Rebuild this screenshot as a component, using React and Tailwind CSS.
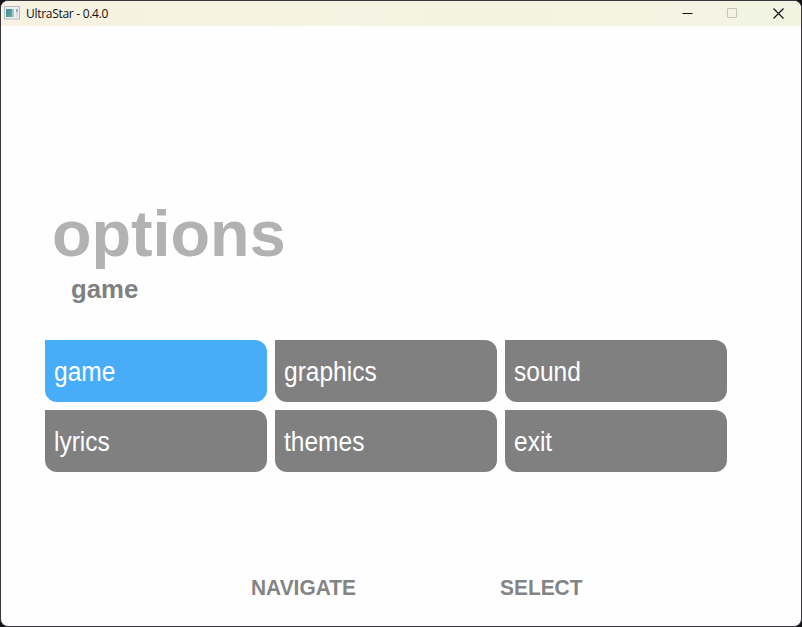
const MENU = [
  { label: "game", active: true },
  { label: "graphics" },
  { label: "sound" },
  { label: "lyrics" },
  { label: "themes" },
  { label: "exit" },
];

function AppIcon() {
  return (
    <svg className="mb-[1px] ml-[3px] h-[14px] w-4 shrink-0" viewBox="0 0 16 14">
      <rect x="0.5" y="0.5" width="15" height="12.5" fill="#eef1f2" stroke="#b4babd" />
      <defs>
        <linearGradient id="pane" x1="0" y1="0" x2="1" y2="1">
          <stop offset="0" stopColor="#4389a5" />
          <stop offset="1" stopColor="#5fae8b" />
        </linearGradient>
      </defs>
      <rect x="2" y="3" width="6" height="8" fill="url(#pane)" />
      <rect x="8" y="3" width="2" height="8" fill="#a9c3ca" />
      <rect x="12" y="3" width="2" height="3" fill="#93aeb6" />
      <rect x="12" y="6" width="2" height="5" fill="#d5dcdf" />
    </svg>
  );
}

function TitleBar() {
  return (
    <header className="flex h-[25px] items-center bg-linear-to-r from-[#f7f2e2] to-[#f2f4e2]">
      <AppIcon />
      <span className="ml-[6px] mt-[1px] whitespace-nowrap font-['Open_Sans',sans-serif] text-[12px] leading-none tracking-[-0.29px] text-[#111]">
        UltraStar - 0.4.0
      </span>
      <div className="ml-auto mr-[17.5px] flex items-center gap-[34.5px]">
        <svg className="h-[11px] w-[11px]" viewBox="0 0 11 11">
          <path d="M0.5 5.5H10.5" stroke="#111" />
        </svg>
        <svg className="h-[11px] w-[11px]" viewBox="0 0 11 11">
          <rect x="0.5" y="0.5" width="9" height="9" rx="0.5" fill="none" stroke="#c3c4b4" />
        </svg>
        <svg className="h-[11px] w-[11px]" viewBox="0 0 11 11">
          <path d="M0.5 0.5L10.5 10.5M10.5 0.5L0.5 10.5" stroke="#111" strokeWidth="1.15" />
        </svg>
      </div>
    </header>
  );
}

export default function App() {
  return (
    <div className="h-[627px] w-[802px] overflow-hidden bg-[#141316] font-['Liberation_Sans',Arial,sans-serif]">
      <div className="h-full overflow-hidden rounded-[8px] border border-[#39373b] bg-[#fefefe]">
        <TitleBar />
        <main>
          <h1 className="ml-[51px] mt-[171px] text-[65.5px] font-bold leading-[74px] text-[#b2b2b2]">
            <span className="inline-block origin-left scale-x-[0.988]">options</span>
          </h1>
          <h2 className="ml-[70px] mt-[3px] text-[26px] font-bold leading-[30px] text-[#808080]">
            <span className="inline-block origin-left scale-x-[0.99]">game</span>
          </h2>
          <nav className="ml-[44px] mt-[36px] grid w-[682px] grid-cols-3 gap-2">
            {MENU.map((item) => (
              <button
                key={item.label}
                className={`flex h-[62px] items-center rounded-r-[12px] rounded-bl-[12px] pl-[9px] pt-[2px] text-left text-[27px] leading-[31px] text-white ${
                  item.active ? "bg-[#47adf9]" : "bg-[#808080]"
                }`}
              >
                <span className="origin-left scale-x-[0.908]">{item.label}</span>
              </button>
            ))}
          </nav>
          <footer className="ml-[250px] mt-[103px] flex text-[22px] font-bold leading-[26px] text-[#848484]">
            <span className="w-[249px] origin-left scale-x-[0.95]">NAVIGATE</span>
            <span className="origin-left scale-x-[0.95]">SELECT</span>
          </footer>
        </main>
      </div>
    </div>
  );
}
